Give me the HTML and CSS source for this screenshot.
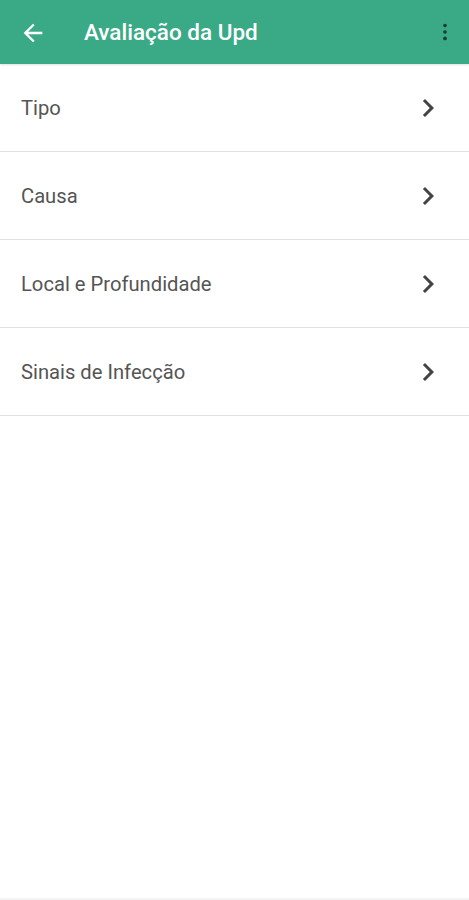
FILE: index.html
```html
<!DOCTYPE html>
<html lang="pt">
<head>
<meta charset="utf-8">
<title>Avaliação da Upd</title>
<link rel="stylesheet" href="styles.css">
</head>
<body>
<div class="screen">
  <header class="appbar">
    <svg class="back" viewBox="0 0 24 24"><path d="M20 11H7.83l5.59-5.59L12 4l-8 8 8 8 1.41-1.41L7.83 13H20v-2z"/></svg>
    <h1 class="title">Avaliação da Upd</h1>
    <svg class="more" viewBox="0 0 24 24"><circle cx="12" cy="5" r="2"/><circle cx="12" cy="12" r="2"/><circle cx="12" cy="19" r="2"/></svg>
  </header>
  <ul class="list">
    <li class="item"><span class="label">Tipo</span><svg class="chev" viewBox="0 0 24 24"><path d="M10 6L8.59 7.41 13.17 12l-4.58 4.59L10 18l6-6z"/></svg></li>
    <li class="item"><span class="label">Causa</span><svg class="chev" viewBox="0 0 24 24"><path d="M10 6L8.59 7.41 13.17 12l-4.58 4.59L10 18l6-6z"/></svg></li>
    <li class="item"><span class="label">Local e Profundidade</span><svg class="chev" viewBox="0 0 24 24"><path d="M10 6L8.59 7.41 13.17 12l-4.58 4.59L10 18l6-6z"/></svg></li>
    <li class="item"><span class="label">Sinais de Infecção</span><svg class="chev" viewBox="0 0 24 24"><path d="M10 6L8.59 7.41 13.17 12l-4.58 4.59L10 18l6-6z"/></svg></li>
  </ul>
  <div class="spacer"></div>
  <div class="bottom"></div>
</div>
</body>
</html>
```

FILE: styles.css
```css
html, body {
  margin: 0;
  padding: 0;
  background: #fff;
}
body {
  font-family: Roboto, "Liberation Sans", sans-serif;
}
.screen {
  display: flex;
  flex-direction: column;
  height: 900px;
}
.appbar {
  height: 64px;
  flex: none;
  background: #3aaa86;
  display: flex;
  align-items: center;
  box-shadow: 0 1px 2px rgba(0,0,0,0.12);
  position: relative;
  z-index: 1;
}
.back {
  width: 28px;
  height: 28px;
  fill: #fff;
  margin-left: 19px;
  margin-top: 1px;
}
.title {
  margin: 0 0 0 37px;
  font-size: 22.5px;
  font-weight: 500;
  color: #fff;
  flex: 1;
}
.more {
  width: 22px;
  height: 22px;
  fill: #1e3b31;
  margin-right: 13px;
}
.list {
  list-style: none;
  margin: 0;
  padding: 0;
}
.item {
  height: 87px;
  border-bottom: 1px solid #e2e2e2;
  display: flex;
  align-items: center;
  padding-left: 21px;
}
.label {
  flex: 1;
  font-size: 20.2px;
  color: #555;
}
.chev {
  width: 36px;
  height: 36px;
  fill: #444;
  margin-right: 23px;
}
.spacer {
  flex: 1;
}
.bottom {
  height: 2px;
  background: #f4f4f4;
}
```
